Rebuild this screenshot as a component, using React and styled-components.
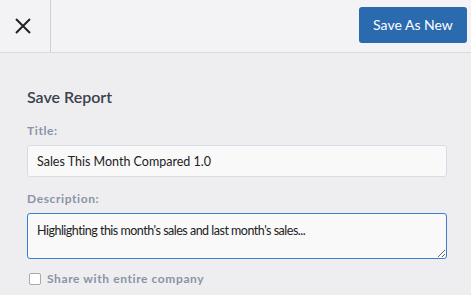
import styled, { createGlobalStyle } from "styled-components";

const GlobalStyle = createGlobalStyle`
  html, body {
    margin: 0;
    padding: 0;
    background: #eeeef1;
    font-family: Lato, "Open Sans", sans-serif;
  }
`;

const Page = styled.div`
  width: 471px;
  height: 295px;
  display: flex;
  flex-direction: column;
  overflow: hidden;
`;

const Header = styled.div`
  height: 53px;
  flex-shrink: 0;
  box-sizing: border-box;
  display: flex;
  align-items: stretch;
  justify-content: space-between;
  background: #f3f3f5;
  border-bottom: 1px solid #d9d9dd;
`;

const CloseButton = styled.button`
  width: 51px;
  border: none;
  border-right: 1px solid #cfcfd3;
  background: transparent;
  display: flex;
  align-items: center;
  justify-content: center;
  padding: 0 4px 0 0;
  cursor: pointer;
`;

const PrimaryButton = styled.button`
  align-self: center;
  margin: 0 4px 3px 0;
  height: 36px;
  width: 108px;
  border: none;
  border-radius: 3px;
  background: #2a6aaf;
  color: #fff;
  font-family: Lato, sans-serif;
  font-size: 14px;
  cursor: pointer;
`;

const Body = styled.div`
  display: flex;
  flex-direction: column;
  align-items: flex-start;
  padding: 34px 24px 0 27px;
`;

const Heading = styled.h2`
  margin: 0 0 17px;
  font-size: 16px;
  line-height: 19px;
  font-weight: 600;
  color: #3b414d;
`;

const Label = styled.label`
  font-size: 12px;
  line-height: 15px;
  font-weight: 700;
  letter-spacing: 0.6px;
  color: #8a93a8;
  margin-bottom: 7px;
`;

const TextInput = styled.input`
  box-sizing: border-box;
  width: 420px;
  height: 32px;
  padding: 0 9px;
  border: 1px solid #d6dce6;
  border-radius: 3px;
  background: #f9f9fa;
  font-family: Lato, sans-serif;
  font-size: 12.5px;
  color: #222;
  margin: 0 0 14px;
  outline: none;
`;

const TextArea = styled.textarea`
  box-sizing: border-box;
  width: 420px;
  height: 46px;
  padding: 9px 9px 6px;
  border: 1px solid #3b7fd0;
  border-radius: 3px;
  background: #f9f9fa;
  font-family: Lato, sans-serif;
  font-size: 12.5px;
  letter-spacing: -0.5px;
  color: #222;
  outline: none;
  margin: 0 0 12px;
  display: block;
`;

const CheckRow = styled.label`
  display: flex;
  align-items: center;
  gap: 6px;
  padding-left: 2px;
  font-size: 12px;
  line-height: 15px;
  font-weight: 700;
  letter-spacing: 0.6px;
  color: #8a93a8;
`;

const Box = styled.span`
  width: 10px;
  height: 10px;
  border: 1px solid #a9a9ad;
  border-radius: 2px;
  background: #fff;
`;

export default function App() {
  return (
    <Page>
      <GlobalStyle />
      <Header>
        <CloseButton aria-label="Close">
          <svg width="16" height="16" viewBox="0 0 16 16">
            <path d="M1 1L15 15M15 1L1 15" stroke="#222" strokeWidth="2" />
          </svg>
        </CloseButton>
        <PrimaryButton>Save As New</PrimaryButton>
      </Header>
      <Body>
        <Heading>Save Report</Heading>
        <Label>Title:</Label>
        <TextInput defaultValue="Sales This Month Compared 1.0" />
        <Label>Description:</Label>
        <TextArea defaultValue="Highlighting this month's sales and last month's sales..." />
        <CheckRow>
          <Box />
          Share with entire company
        </CheckRow>
      </Body>
    </Page>
  );
}
